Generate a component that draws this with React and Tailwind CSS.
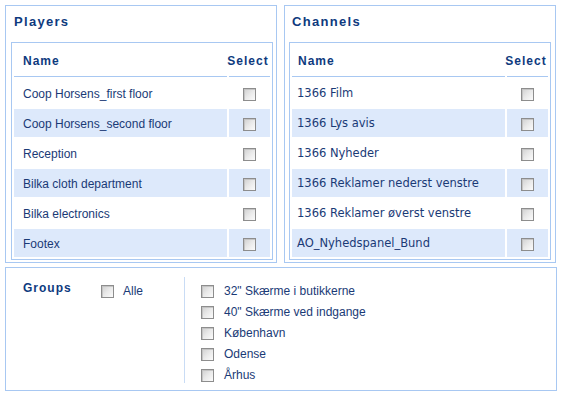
import React from "react";

const players = [
  "Coop Horsens_first floor",
  "Coop Horsens_second floor",
  "Reception",
  "Bilka cloth department",
  "Bilka electronics",
  "Footex",
];
const channels = [
  "1366 Film",
  "1366 Lys avis",
  "1366 Nyheder",
  "1366 Reklamer nederst venstre",
  "1366 Reklamer øverst venstre",
  "AO_Nyhedspanel_Bund",
];
const groups = [
  "32\" Skærme i butikkerne",
  "40\" Skærme ved indgange",
  "København",
  "Odense",
  "Århus",
];

function Box() {
  return (
    <span className="inline-block w-[13px] h-[13px] shrink-0 border border-[#8d8d8d] bg-linear-to-br from-[#cfcfcf] via-[#e9e9e9] to-[#fbfbfb] shadow-[inset_1px_1px_0_#c4c4c4]" />
  );
}

function Panel({ title, rows, arial, pl }) {
  const rowFont = arial
    ? "font-['Liberation_Sans',Arial,sans-serif] text-[12px] pl-[9px]"
    : "font-['DejaVu_Sans',Verdana,sans-serif] text-[11.5px] pl-[5px]";
  return (
    <div className={`w-[272px] h-[258px] border border-[#a8c8f2] ${pl} flex flex-col`}>
      <div className="h-[36px] pt-[8px] pl-[3px] leading-[16px] text-[13px] font-bold tracking-[1.3px] text-[#0e3a7e] font-['Liberation_Sans',Arial,sans-serif]">
        {title}
      </div>
      <div className="w-[262px] border border-[#a8c8f2] p-[2px] grid grid-cols-[213px_41px] grid-rows-[32px_repeat(6,28px)] gap-[2px]">
        <div className={`border-b border-[#a8c8f2] flex items-center ${arial ? "pl-[9px]" : "pl-[6px]"} text-[12px] font-bold tracking-[1px] text-[#0e3a7e] font-['Liberation_Sans',Arial,sans-serif]`}>
          Name
        </div>
        <div className="border-b border-[#a8c8f2] flex items-center justify-center pr-[3px] text-[12px] font-bold tracking-[1px] text-[#0e3a7e] font-['Liberation_Sans',Arial,sans-serif] whitespace-nowrap">
          Select
        </div>
        {rows.map((r, i) => {
          const bg = i % 2 === 1 ? "bg-[#dde9fb]" : "bg-white";
          return (
            <React.Fragment key={r}>
              <div className={`${bg} ${rowFont} flex items-center text-[#1a3a76] whitespace-nowrap pt-[2px]`}>
                {r}
              </div>
              <div className={`${bg} flex items-center justify-center pt-[2px]`}>
                <Box />
              </div>
            </React.Fragment>
          );
        })}
      </div>
    </div>
  );
}

export default function App() {
  return (
    <div className="w-[561px] h-[396px] bg-white pt-[5px] pl-[5px] flex flex-col gap-[4px]">
      <div className="flex gap-[7px]">
        <Panel title="Players" rows={players} arial pl="pl-[5px]" />
        <Panel title="Channels" rows={channels} pl="pl-[4px]" />
      </div>
      <div className="w-[552px] h-[124px] border border-[#a8c8f2] flex font-['Liberation_Sans',Arial,sans-serif] text-[12px] text-[#1a3a76]">
        <div className="w-[95px] pl-[17px] pt-[13px] leading-[14px] font-bold tracking-[1px] text-[#0e3a7e]">
          Groups
        </div>
        <div className="w-[83px] pt-[13px]">
          <div className="h-[21px] flex items-center">
            <Box />
            <span className="ml-[9px] leading-[21px]">Alle</span>
          </div>
        </div>
        <div className="mt-[9px] h-[106px] border-l border-[#c9dcf5] pl-[16px] pt-[4px]">
          {groups.map((g) => (
            <div key={g} className="h-[21px] flex items-center">
              <Box />
              <span className="ml-[10px] leading-[21px] whitespace-nowrap">{g}</span>
            </div>
          ))}
        </div>
      </div>
    </div>
  );
}
